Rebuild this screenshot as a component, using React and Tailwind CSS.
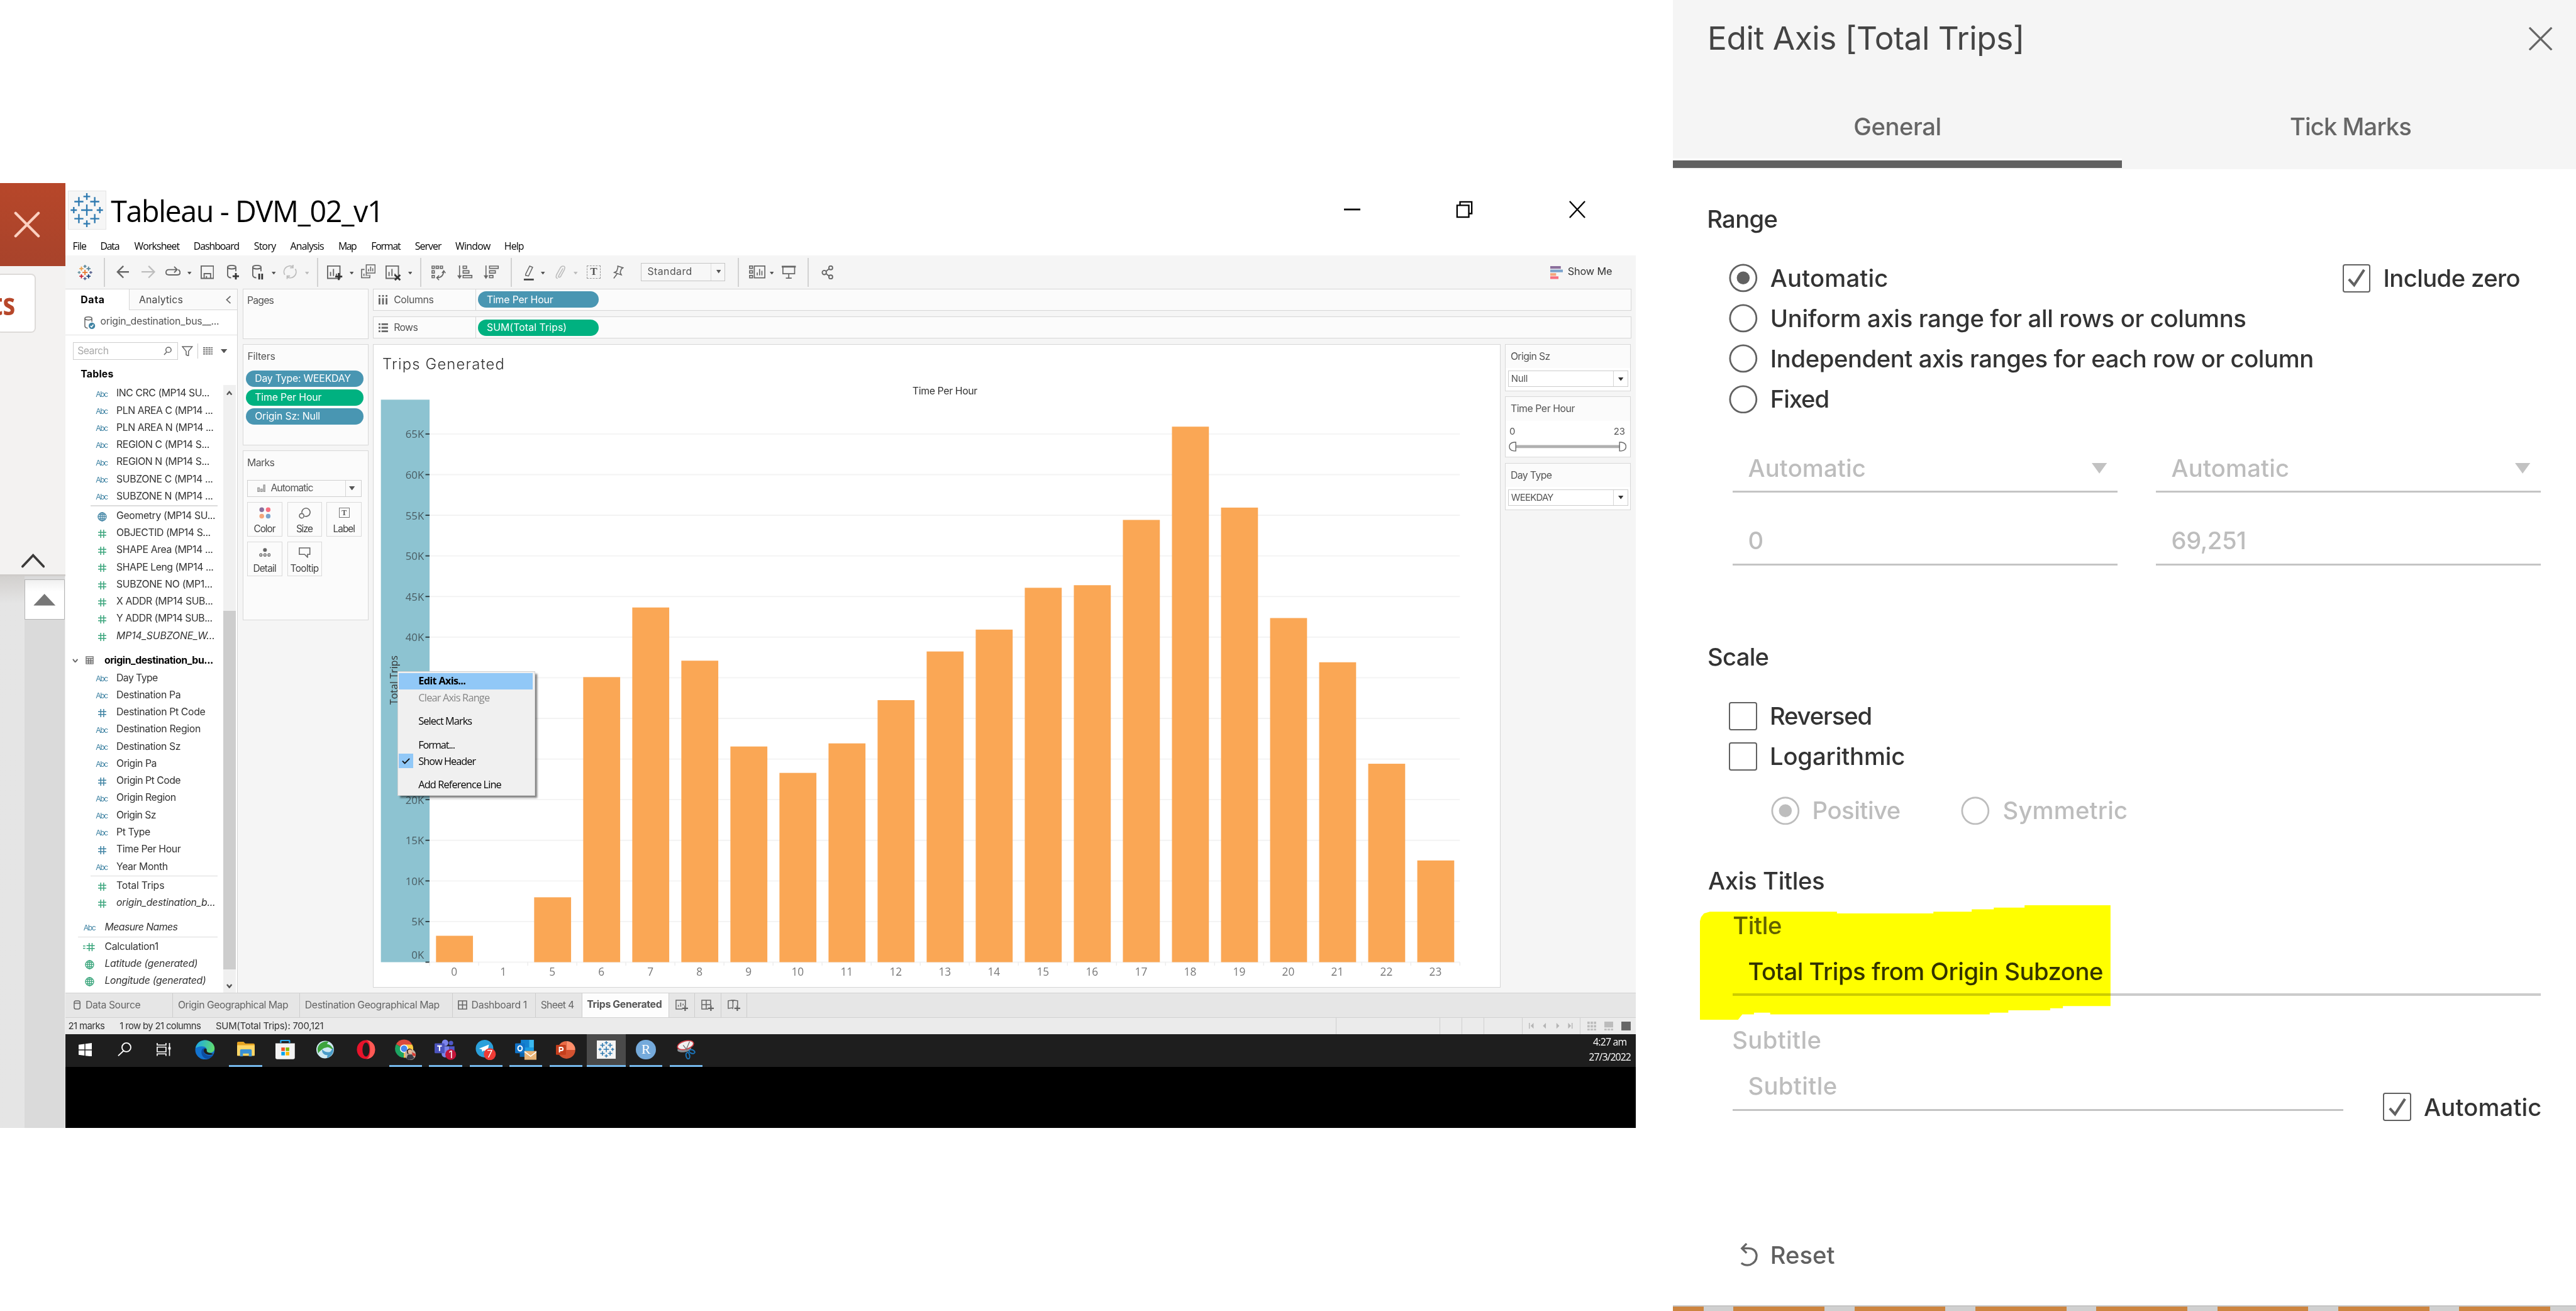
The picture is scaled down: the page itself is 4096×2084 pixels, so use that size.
import React, { useLayoutEffect, useRef } from "react";

/* A single line of text whose tracking is adjusted to fill a given width. */
function T({ w, className = "", children }) {
  const outer = useRef(null);
  const inner = useRef(null);
  useLayoutEffect(() => {
    const o = outer.current;
    const i = inner.current;
    i.style.letterSpacing = "0px";
    const ow = o.getBoundingClientRect().width;
    const iw = i.getBoundingClientRect().width;
    const n = i.textContent.length;
    if (n > 1 && iw > 0) i.style.letterSpacing = (((ow - iw) / ow) * w) / (n - 1) + "px";
  }, [w, children]);
  return (
    <span ref={outer} style={{ width: w }} className={"block shrink-0 whitespace-pre leading-none " + className}>
      <span ref={inner} className="whitespace-pre">{children}</span>
    </span>
  );
}

const Svg = ({ w, h, className = "", children, ...p }) => (
  <svg width={w} height={h} viewBox={`0 0 ${w} ${h}`} fill="none" stroke="#666" strokeWidth="2" className={"block shrink-0 " + className} {...p}>
    {children}
  </svg>
);

const Caret = ({ w = 8, h = 6, color = "#555", className = "" }) => (
  <Svg w={w} h={h} stroke="none" className={className}>
    <path d={`M0 0H${w}L${w / 2} ${h}Z`} fill={color} />
  </Svg>
);

const VSep = ({ className = "" }) => <div className={"h-[49px] w-[2px] shrink-0 bg-[#d2d2d2] " + className} />;

const plus = (x, y, r, key, color) => (
  <path key={key} d={`M${x - r} ${y}h${2 * r}M${x} ${y - r}v${2 * r}`} stroke={color} />
);

function TableauMark({ size, className = "", sw = 2, colors }) {
  const c = colors || ["#2f7ab0", "#2f7ab0", "#2f7ab0", "#2f7ab0", "#2f7ab0", "#2f7ab0", "#2f7ab0", "#2f7ab0", "#2f7ab0"];
  return (
    <svg width={size} height={size} viewBox="0 0 60 60" fill="none" strokeWidth={sw} className={"block shrink-0 " + className}>
      {plus(30, 30, 10, 0, c[0])}
      {plus(16, 15, 8, 1, c[1])}
      {plus(44, 15, 8, 2, c[2])}
      {plus(16, 45, 8, 3, c[3])}
      {plus(44, 45, 8, 4, c[4])}
      {plus(30, 6, 6, 5, c[5])}
      {plus(30, 54, 6, 6, c[6])}
      {plus(7, 30, 5.5, 7, c[7])}
      {plus(53, 30, 5.5, 8, c[8])}
    </svg>
  );
}

/* ---------- slide editor strip at the far left ---------- */
function SlideStrip() {
  return (
    <div className="flex h-[1611px] w-[112px] shrink-0 flex-col overflow-hidden bg-[#e5e5e5]">
      <div className="flex h-[142px] shrink-0 items-start bg-gradient-to-b from-[#b7472a] to-[#a8432b] pt-[48px] pl-[24px]">
        <Svg w={45} h={45} stroke="#fbd0c0" strokeWidth="4.5" strokeLinecap="round">
          <path d="M3 3L42 42M42 3L3 42" />
        </Svg>
      </div>
      <div className="h-[528px] shrink-0 border-b-4 border-[#cfccca] bg-[#f3f2f1]">
        <div className="mt-[13px] -ml-[6px] flex h-[100px] w-[67px] items-center justify-end rounded-[8px] border-[3px] border-[#dddbd9] bg-white pr-[33px]">
          <span className="origin-right scale-x-[0.82] font-['Open_Sans',sans-serif] text-[52px] leading-none font-bold text-[#b7472a]">ts</span>
        </div>
        <Svg w={40} h={24} stroke="#3b3a39" strokeWidth="4" strokeLinecap="round" className="mt-[377px] ml-[36px]">
          <path d="M2 22L20 3L38 22" />
        </Svg>
      </div>
      <div className="flex grow">
        <div className="w-[42px] bg-gradient-to-b from-[#d2d0ce] via-[#e5e5e5] via-[5%] to-[#e5e5e5]" />
        <div className="w-[69px] bg-[#dadada] pt-[6px]">
          <div className="flex h-[68px] w-[68px] items-center justify-center border-2 border-[#b5b5b5] bg-gradient-to-b from-[#f0f0f0] to-white to-[30%]">
            <Caret w={38} h={20} color="#777" className="rotate-180" />
          </div>
        </div>
        <div className="w-px bg-[#efefef]" />
      </div>
    </div>
  );
}

/* ---------- window title, menus, toolbar ---------- */
const MENUS = [
  ["File", 24, "ml-[12px]"], ["Data", 33.5, "ml-[23px]"], ["Worksheet", 78, "ml-[24.5px]"], ["Dashboard", 79, "ml-[23px]"],
  ["Story", 38, "ml-[24px]"], ["Analysis", 58, "ml-[24px]"], ["Map", 32, "ml-[24px]"], ["Format", 51, "ml-[24px]"],
  ["Server", 46, "ml-[23.6px]"], ["Window", 60.5, "ml-[23px]"], ["Help", 34, "ml-[23px]"],
];

function TitleBar() {
  return (
    <div className="flex h-[91px] items-start pl-[4px]">
      <div className="mt-[13px] flex h-[66px] w-[65px] items-center justify-center border border-[#e4e4e4] bg-[#f6f6f6]">
        <TableauMark size={58} sw={2.6} />
      </div>
      <T w={466} className="mt-[22.5px] ml-[8px] font-['Open_Sans',sans-serif] text-[50px] text-black">Tableau - DVM_02_v1</T>
      <div className="ml-[1637px] flex">
        <Svg w={28} h={30} stroke="#000" strokeWidth="3" className="mt-[30px]"><path d="M0 15H28" /></Svg>
        <Svg w={30} h={30} stroke="#000" strokeWidth="2.5" className="mt-[30px] ml-[163px]">
          <path d="M2 8H22V28H2ZM7 8V2H27V22H22" />
        </Svg>
        <Svg w={30} h={30} stroke="#000" strokeWidth="2.5" className="mt-[30px] ml-[162px]"><path d="M2 1L28 29M28 1L2 29" /></Svg>
      </div>
    </div>
  );
}

function MenuBar() {
  return (
    <div className="flex h-[32px] items-start pt-[8.5px] font-['Open_Sans',sans-serif] text-[17px] text-black">
      {MENUS.map(([t, w, m]) => <T key={t} w={w} className={m}>{t}</T>)}
    </div>
  );
}

const chartBox = <path d="M1 1H22V22H1ZM6 18V11M11 18V6M16 18V14" />;

function Toolbar() {
  const D = "#666";
  const L = "#bdbdbd";
  return (
    <div className="flex h-[57px] items-start bg-[#f5f5f5] pt-[5px]">
      <TableauMark size={26} sw={4.5} className="mt-[12px] ml-[20px]" colors={["#e8762c", "#e8a04c", "#5b879b", "#c72035", "#1f457e", "#5b879b", "#5b6591", "#7099a6", "#5b6591"]} />
      <VSep className="ml-[19px]" />
      <Svg w={22} h={24} strokeWidth="2.6" className="mt-[12px] ml-[19px]"><path d="M12 2L2 12L12 22M2 12H22" /></Svg>
      <Svg w={24} h={24} stroke={L} strokeWidth="2.4" className="mt-[12px] ml-[21px]"><path d="M12 2L22 12L12 22M22 12H0" /></Svg>
      <Svg w={26} h={18} className="mt-[14px] ml-[17px]"><path d="M15 1L20 6L15 11M20 6H6Q1 6 1 11Q1 15 6 15H20Q25 15 25 11Q25 8 22 6" /></Svg>
      <Caret w={7} h={5} className="mt-[23px] ml-[12px]" />
      <Svg w={23} h={23} className="mt-[13px] ml-[15px]"><path d="M1 1H22V22H1ZM6 22V14H17V22M10 22V18" /></Svg>
      <Svg w={21} h={26} className="mt-[12px] ml-[22px]">
        <ellipse cx="8" cy="4" rx="7" ry="3" /><path d="M1 4V18Q2 22 7 22M15 4V11" /><path d="M15 14V25M9.500 19.500H20.500" stroke="#333" strokeWidth="3" />
      </Svg>
      <Svg w={19} h={26} className="mt-[12px] ml-[22px]">
        <ellipse cx="8" cy="4" rx="7" ry="3" /><path d="M1 4V18Q2 22 7 22M15 4V11" /><path d="M12 15V25M17 15V25" stroke="#333" strokeWidth="3" />
      </Svg>
      <Caret w={7} h={5} className="mt-[23px] ml-[15px]" />
      <Svg w={24} h={24} stroke={L} className="mt-[12px] ml-[12px]"><path d="M3 17A10 10 0 0 1 17 3.500M21 7A10 10 0 0 1 7 20.500M17 0V5H12M7 24V19H12" /></Svg>
      <Caret w={7} h={5} color={L} className="mt-[23px] ml-[13px]" />
      <VSep className="ml-[14px]" />
      <Svg w={27} h={26} className="mt-[13px] ml-[15px]">{chartBox}<path d="M20 13V25M14 19H26" stroke="#333" strokeWidth="3" /></Svg>
      <Caret w={7} h={5} className="mt-[23px] ml-[11px]" />
      <Svg w={25} h={24} className="mt-[11px] ml-[13px]">
        <path d="M9 1H24V15H9ZM13 12V8M16.500 12V4M20 12V7M6 9H1V23H15V18M5 20V16M9 20V16M12 20V18" strokeWidth="1.700" />
      </Svg>
      <Svg w={27} h={26} className="mt-[13px] ml-[17px]">{chartBox}<path d="M16 16L25 25M25 16L16 25" stroke="#333" strokeWidth="3" /></Svg>
      <Caret w={7} h={5} className="mt-[23px] ml-[11px]" />
      <VSep className="ml-[14px]" />
      <Svg w={25} h={25} className="mt-[13px] ml-[17px]" strokeWidth="1.700">
        <path d="M1 1H5V5H1ZM8 1H12V5H8ZM15 1H19V5H15ZM1 9H5V13H1ZM1 17H5V21H1ZM9 21Q20 21 21 10M18 13L21 9L24 13M13 17L9 21L13 25" />
      </Svg>
      <Svg w={26} h={24} className="mt-[13px] ml-[19.500px]" strokeWidth="1.700">
        <path d="M4 0V19M10 1H16V5H10ZM10 9H20V13H10ZM10 17H25V21H10Z" /><path d="M0 17H8L4 23Z" fill={D} stroke="none" />
      </Svg>
      <Svg w={26} h={24} className="mt-[13px] ml-[19px]" strokeWidth="1.700">
        <path d="M4 0V19M10 1H25V5H10ZM10 9H20V13H10ZM10 17H16V21H10Z" /><path d="M0 17H8L4 23Z" fill={D} stroke="none" />
      </Svg>
      <VSep className="ml-[19.500px]" />
      <Svg w={19} h={25} className="mt-[13px] ml-[20px]"><path d="M11 1L16 3L9 18L4 17L4 15Z" strokeWidth="1.600" /><path d="M1 24H18" strokeWidth="3" stroke="#444" /></Svg>
      <Caret w={7} h={5} className="mt-[23px] ml-[11px]" />
      <Svg w={18} h={24} stroke={L} className="mt-[13px] ml-[17px]" strokeWidth="1.700"><path d="M13 5L6 17Q4 20 7 20Q9 20 10 17L15 8Q18 1 13 1Q10 1 8 5L2 16Q0 22 4 22" /></Svg>
      <Caret w={7} h={5} color={L} className="mt-[23px] ml-[14px]" />
      <div className="mt-[13px] ml-[15px] flex h-[22px] w-[24px] items-center justify-center border-2 border-dashed border-[#999] font-['Liberation_Serif',serif] text-[18px] leading-none font-bold text-[#555]">T</div>
      <Svg w={19} h={23} className="mt-[13px] ml-[20px]" strokeWidth="1.700"><path d="M9 1L18 4L15 6L13 12L15 16L3 12L7 10L9 4ZM8 14L2 22" /></Svg>
      <div className="mt-[8px] ml-[29px] flex h-[31px] w-[144px] items-center border border-[#c6c6c6] bg-[#f7f7f7]">
        <T w={76} className="ml-[10.500px] text-[17px] text-[#555]">Standard</T>
        <div className="ml-[32px] h-full w-px bg-[#dcdcdc]" />
        <Caret w={8} h={6} className="ml-[8px]" />
      </div>
      <VSep className="ml-[22px]" />
      <Svg w={28} h={23} className="mt-[13px] ml-[17px]" strokeWidth="1.800"><path d="M1 1H6V5H1ZM1 9H6V13H1ZM1 17H6V21H1ZM9 1H27V21H9ZM14 17V12M18 17V6M22 17V9" /></Svg>
      <Caret w={7} h={5} className="mt-[23px] ml-[7px]" />
      <Svg w={24} h={23} className="mt-[13px] ml-[14px]" strokeWidth="1.800"><path d="M2 3V14H22V3M12 14V21M7 21.500H17" /><path d="M0 2H24" strokeWidth="3" /></Svg>
      <VSep className="ml-[20px]" />
      <Svg w={21} h={24} className="mt-[13px] ml-[21px]"><circle cx="5" cy="12" r="3.500" /><circle cx="16" cy="4" r="3.200" /><circle cx="16" cy="19.500" r="3.200" /><path d="M8 10L13 6M8 14L13 18" /></Svg>
      <Svg w={22} h={23} stroke="none" className="mt-[14px] ml-[1222px]">
        <path d="M0 0H18V4.500H0Z" fill="#8b6f9c" /><path d="M0 6H22V10.500H0Z" fill="#7ba3cc" /><path d="M0 12H10V16.500H0Z" fill="#f4a67c" /><path d="M0 17.500H14V22H0Z" fill="#f96f7f" />
      </Svg>
      <T w={76} className="mt-[14px] ml-[8px] text-[17.5px] text-[#333]">Show Me</T>
    </div>
  );
}

/* ---------- data pane ---------- */
const Hash = ({ color, calc }) => (
  <Svg w={calc ? 20 : 14} h={14} stroke={color} strokeWidth="1.600" className={calc ? "-ml-[2px]" : ""}>
    {calc ? <path d="M0 5H4M0 9H4M10.500 0V14M15.500 0V14M6 4.500H20M6 9.500H20" /> : <path d="M4.500 0V14M9.500 0V14M0 4.500H14M0 9.500H14" />}
  </Svg>
);
const Globe = ({ color }) => (
  <Svg w={16} h={16} stroke={color} strokeWidth="1.400">
    <circle cx="8" cy="8" r="7" /><ellipse cx="8" cy="8" rx="3.400" ry="7" /><path d="M1 8H15M8 1V15M2.500 4.500H13.500M2.500 11.500H13.500" />
  </Svg>
);
const BLUE = "#3f83a3";
const GREEN = "#3aa57c";

function FieldIcon({ kind }) {
  if (kind === "abc") return <T w={21.5} className="text-[13px] text-[#3f83a3]">Abc</T>;
  if (kind === "num") return <Hash color={GREEN} />;
  if (kind === "dim") return <Hash color={BLUE} />;
  if (kind === "calc") return <Hash color={GREEN} calc />;
  if (kind === "geo") return <Globe color={BLUE} />;
  return <Globe color={GREEN} />;
}

function Field({ f, top }) {
  const [kind, label, w, it] = f;
  return (
    <div className={"flex h-[29.25px] items-center text-[17px] text-[#333] " + (top ? "pl-[30px]" : "pl-[51px]")}>
      <div className="flex w-[22px] shrink-0 justify-center pt-[3px]"><FieldIcon kind={kind} /></div>
      <T w={w} className={(top ? "ml-[14.5px] " : "ml-[13.5px] ") + (it ? "italic" : "")}>{label}</T>
    </div>
  );
}

const G1 = [["abc", "INC CRC (MP14 SU...", 159], ["abc", "PLN AREA C (MP14 ...", 165], ["abc", "PLN AREA N (MP14 ...", 166], ["abc", "REGION C (MP14 S...", 159], ["abc", "REGION N (MP14 S...", 159], ["abc", "SUBZONE C (MP14 ...", 165], ["abc", "SUBZONE N (MP14 ...", 165]];
const G2 = [["geo", "Geometry (MP14 SU...", 169], ["num", "OBJECTID (MP14 S...", 161], ["num", "SHAPE Area (MP14 ...", 165], ["num", "SHAPE Leng (MP14 ...", 166], ["num", "SUBZONE NO (MP1...", 164], ["num", "X ADDR (MP14 SUB...", 165], ["num", "Y ADDR (MP14 SUB...", 164], ["num", "MP14_SUBZONE_W...", 168, true]];
const G3 = [["abc", "Day Type", 71], ["abc", "Destination Pa", 110], ["dim", "Destination Pt Code", 152], ["abc", "Destination Region", 144], ["abc", "Destination Sz", 110], ["abc", "Origin Pa", 69], ["dim", "Origin Pt Code", 110], ["abc", "Origin Region", 102], ["abc", "Origin Sz", 68], ["abc", "Pt Type", 58], ["dim", "Time Per Hour", 110], ["abc", "Year Month", 88]];
const G4 = [["num", "Total Trips", 82], ["num", "origin_destination_b...", 169, true]];
const G5 = [["calc", "Calculation1", 92], ["ggeo", "Latitude (generated)", 159, true], ["ggeo", "Longitude (generated)", 173, true]];

function DataPane() {
  return (
    <div className="flex h-[1200px] w-[293px] shrink-0 flex-col border-r-2 border-[#d6d6d6] bg-white">
      <div className="flex h-[37px] shrink-0">
        <div className="w-[108px] border-t-2 border-[#d9d9d9] pt-[10px] pl-[25.5px]">
          <T w={40.5} className="text-[17px] font-bold text-black">Data</T>
        </div>
        <div className="flex grow border-2 border-r-0 border-[#d6d6d6] bg-[#fafafa] pt-[10px] pl-[16px]">
          <T w={75} className="text-[17px] text-[#444]">Analytics</T>
          <Svg w={9} h={14} strokeWidth="1.800" className="mt-[1px] ml-[73px]"><path d="M8 1L1.500 7L8 13" /></Svg>
        </div>
      </div>
      <div className="flex h-[43px] shrink-0 items-start border-b-2 border-[#e1e1e1] pt-[10px] pl-[32px]">
        <Svg w={19} h={23} strokeWidth="1.600"><ellipse cx="7" cy="3.500" rx="6" ry="2.600" /><path d="M1 3.500V17Q2 20 6 20M13 3.500V9" /><circle cx="13" cy="16" r="5.500" fill={BLUE} stroke="none" /><path d="M10.500 16L12.500 18L15.500 14" stroke="#fff" /></Svg>
        <T w={203} className="mt-[1px] ml-[8px] text-[17px] text-[#555]">origin_destination_bus__...</T>
      </div>
      <div className="flex h-[84px] shrink-0 flex-col">
        <div className="mt-[11px] ml-[12px] flex h-[31px] items-center">
          <div className="flex h-[31px] w-[180px] shrink-0 items-center border-2 border-[#cfcfcf] pl-[7px]">
            <T w={53.5} className="text-[17px] text-[#aaa]">Search</T>
            <Svg w={14} h={15} strokeWidth="1.600" className="ml-[93px]"><circle cx="8.500" cy="5.500" r="4.500" /><path d="M5.500 9L1 14" /></Svg>
          </div>
          <Svg w={19} h={18} strokeWidth="1.600" className="ml-[6px]"><path d="M1 1H18L11.500 9V17L7.500 15V9Z" /></Svg>
          <div className="ml-[8px] h-[25px] w-px bg-[#ccc]" />
          <Svg w={17} h={14} strokeWidth="2" className="ml-[8px]"><path d="M0 2H17M0 5.500H17M0 9H17M0 12.500H17" strokeDasharray="3.500 1" /></Svg>
          <Caret w={11} h={7} className="ml-[13px]" />
        </div>
        <T w={56} className="mt-[15.500px] ml-[25.5px] text-[17px] font-bold text-black">Tables</T>
      </div>
      <div className="flex min-h-0 grow">
        <div className="w-[269px] shrink-0">
          {G1.map((f) => <Field key={f[1]} f={f} />)}
          <div className="mt-[1px] mb-[1px] ml-[42px] h-[2px] w-[217px] bg-[#dcdcdc]" />
          {G2.map((f) => <Field key={f[1]} f={f} />)}
          <div className="mt-[12.5px] flex h-[30px] items-center pl-[11px]">
            <Svg w={10} h={7} strokeWidth="2"><path d="M1 1L5 6L9 1" /></Svg>
            <Svg w={14} h={14} strokeWidth="1.300" className="ml-[13px]"><path d="M1 1H13V13H1ZM1 4H13M1 7H13M1 10H13M5 4V13M9 4V13" /></Svg>
            <T w={186} className="ml-[18px] text-[17px] font-bold text-black">origin_destination_bu...</T>
          </div>
          {G3.map((f) => <Field key={f[1]} f={f} />)}
          <div className="mt-[1px] mb-[1px] ml-[42px] h-[1.5px] w-[217px] bg-[#dcdcdc]" />
          {G4.map((f) => <Field key={f[1]} f={f} />)}
          <div className="h-[12.5px]" />
          <Field top f={["abc", "Measure Names", 125, true]} />
          <div className="mt-[1px] mb-[1px] ml-[21px] h-[1.5px] w-[238px] bg-[#dcdcdc]" />
          {G5.map((f) => <Field top key={f[1]} f={f} />)}
        </div>
        <div className="flex w-[21px] flex-col items-center bg-[#f0f0f0]">
          <Svg w={10} h={8} strokeWidth="2.600" stroke="#555" className="mt-[10px]"><path d="M1 7L5 2L9 7" /></Svg>
          <div className="mt-[368px] h-[611px] w-full shrink-0 bg-[#cdcdcd]" />
          <Svg w={10} h={8} strokeWidth="2.600" stroke="#555" className="mt-[24px]"><path d="M1 1L5 6L9 1" /></Svg>
        </div>
      </div>
    </div>
  );
}

/* ---------- cards ---------- */
const Pill = ({ children, w, green, className = "" }) => (
  <div className={"flex h-[28px] items-center rounded-full pl-[15px] text-[17px] text-white " + (green ? "bg-[#00b180] " : "bg-[#4996b2] ") + className}>
    <T w={w}>{children}</T>
  </div>
);

const MarkButton = ({ label, w, icon, className = "" }) => (
  <div className={"flex h-[59px] shrink-0 flex-col items-center border-2 border-[#dadada] bg-[#fbfbfb] pt-[8px] " + className}>
    <div className="flex h-[20px] items-center">{icon}</div>
    <T w={w} className="mt-[8.500px] text-[16.5px] text-[#444]">{label}</T>
  </div>
);

function CardsColumn() {
  const box = "border-2 border-[#d8d8d8] bg-[#fbfbfb] ";
  return (
    <div className="ml-[8.5px] flex w-[215px] shrink-0 flex-col">
      <div className={box + "h-[86px] pt-[11px] pl-[7px]"}>
        <T w={46} className="text-[17px] text-[#555]">Pages</T>
      </div>
      <div className={box + "mt-[9px] h-[172px] pt-[11px] pl-[5px]"}>
        <T w={47.5} className="ml-[2.5px] text-[17px] text-[#555]">Filters</T>
        <div className="mt-[16px] flex w-[200.500px] flex-col gap-[4px]">
          <Pill w={164}>Day Type: WEEKDAY</Pill>
          <Pill w={114} green>Time Per Hour</Pill>
          <Pill w={111.5}>Origin Sz: Null</Pill>
        </div>
      </div>
      <div className={box + "mt-[9.500px] h-[289px] pt-[11px] pl-[7px]"}>
        <T w={47} className="text-[17px] text-[#555]">Marks</T>
        <div className="mt-[20.500px] flex h-[29px] w-[195px] items-center border-2 border-[#d0d0d0] pl-[16px]">
          <Svg w={14} h={14} stroke="#999" strokeWidth="1.600"><path d="M1 6H3.500V12H1ZM6 8H8.500V12H6ZM11 1H13V12H11Z" /></Svg>
          <T w={73} className="ml-[9px] text-[17px] text-[#555]">Automatic</T>
          <div className="ml-[54px] h-full w-px bg-[#d6d6d6]" />
          <Caret w={10} h={7} className="ml-[6px]" />
        </div>
        <div className="mt-[8.500px] flex">
          <MarkButton className="w-[60px]" label="Color" w={37.5} icon={<Svg w={20} h={20} stroke="none"><circle cx="4.500" cy="4.500" r="4" fill="#8b6f9c" /><circle cx="15.500" cy="4.500" r="4" fill="#f96f7f" /><circle cx="4.500" cy="15.500" r="4" fill="#f4a67c" /><circle cx="15.500" cy="15.500" r="4" fill="#7ba3cc" /></Svg>} />
          <MarkButton className="ml-[8.500px] w-[59px]" label="Size" w={29} icon={<Svg w={20} h={20} strokeWidth="1.700"><path d="M5.500 10A7 7 0 1 1 10 15.500" /><circle cx="5" cy="15" r="3.900" /></Svg>} />
          <MarkButton className="ml-[8px] w-[60px]" label="Label" w={38} icon={<div className="flex h-[17px] w-[18px] items-center justify-center border-2 border-[#777] font-['Liberation_Serif',serif] text-[13px] leading-none font-bold text-[#555]">T</div>} />
        </div>
        <div className="mt-[8.500px] flex">
          <MarkButton className="w-[60px]" label="Detail" w={40} icon={<Svg w={20} h={16} strokeWidth="1.500"><circle cx="10" cy="3.500" r="2.500" fill="#666" /><circle cx="3" cy="12" r="2" /><circle cx="10" cy="12" r="2" /><circle cx="17" cy="12" r="2" /></Svg>} />
          <MarkButton className="ml-[8.500px] w-[59px]" label="Tooltip" w={49} icon={<Svg w={20} h={18} strokeWidth="1.700"><path d="M1 1H19V12H15V17L10 12H1Z" /></Svg>} />
        </div>
      </div>
    </div>
  );
}

function Shelf({ icon, label, w, pill, className = "" }) {
  return (
    <div className={"flex h-[38px] shrink-0 items-center border-2 border-[#d6d6d6] bg-[#fbfbfb] pl-[8.5px] " + className}>
      <div className="w-[25.500px] shrink-0">{icon}</div>
      <div className="w-[139px] shrink-0"><T w={w} className="text-[17px] text-[#555]">{label}</T></div>
      <div className="h-full w-[1.500px] bg-[#d6d6d6]" />
      {pill}
    </div>
  );
}

/* ---------- bar chart ---------- */
const BARS = [["0", 1596], ["1", 1641], ["5", 1530.4], ["6", 1155], ["7", 1036.3], ["8", 1127], ["9", 1273.3], ["10", 1318.3], ["11", 1268], ["12", 1194.3], ["13", 1111.3], ["14", 1074], ["15", 1002.7], ["16", 998.3], ["17", 887], ["18", 728], ["19", 866], ["20", 1054.3], ["21", 1129.7], ["22", 1302.7], ["23", 1467.6]];
const GRID = [0, 5, 10, 15, 20, 25, 30, 35, 40, 45, 50, 55, 60, 65];
/* ticks that lie under the open axis menu carry no label */
const COVERED = [25, 30, 35];

function Chart() {
  return (
    <svg width="1918" height="1000" viewBox="637.5 679.5 1918 1000" className="block font-['Open_Sans',sans-serif]">
      <rect x="650" y="682" width="83" height="959" fill="#8dc3d1" />
      {GRID.map((t) => {
        const y = 1641 - (t / 5) * 69.27;
        return (
          <g key={t}>
            <path d={`M733 ${y}H2490`} stroke="#f3f3f3" strokeWidth="2" />
            {!COVERED.includes(t) && (
              <>
                <path d={`M726 ${y}H733`} stroke="#2c3b40" strokeWidth="2" />
                <text x="723.5" y={t === 0 ? 1635.5 : y + 7} textAnchor="end" fontSize="18" fill="#4a5c62">{t}K</text>
              </>
            )}
          </g>
        );
      })}
      <text transform="translate(678 1160) rotate(-90)" textAnchor="middle" fontSize="17" textLength="84" fill="#333">Total Trips</text>
      {BARS.map(([h, top], i) => {
        const x = 744 + i * 83.67;
        return (
          <g key={h}>
            <rect x={x} y={top} width="63" height={1641 - top} fill="#faa755" />
            <text x={x + 31} y="1664.5" textAnchor="middle" fontSize="18.500" fill="#777">{h}</text>
            <path d={`M${x - 11} 1641v6`} stroke="#ececec" strokeWidth="1.500" />
          </g>
        );
      })}
      <path d="M2490 1641v6" stroke="#ececec" strokeWidth="1.500" />
    </svg>
  );
}

function MenuItem({ label, w, className = "", active, checked }) {
  return (
    <div className={"flex h-[28px] shrink-0 items-center text-[17.5px] " + (active ? "bg-[#91c8f7] font-bold " : "") + className}>
      <div className={"flex h-[25px] w-[25px] items-center justify-center " + (checked ? "bg-[#91c8f7]" : "")}>
        {checked && <Svg w={14} h={11} stroke="#111"><path d="M1 5L5 9L13 1" /></Svg>}
      </div>
      <T w={w} className="ml-[9px]">{label}</T>
    </div>
  );
}

function AxisMenu() {
  return (
    <div className="absolute top-[556.5px] left-[40px] flex h-[213px] w-[235px] flex-col border-2 border-[#d2d2d2] bg-[#f0f0f0] py-[2px] pr-[3px] pl-[1px] font-['Open_Sans',sans-serif] text-black shadow-[4px_4px_3px_rgba(0,0,0,0.5)]">
      <MenuItem active label="Edit Axis..." w={81} />
      <MenuItem label="Clear Axis Range" w={122} className="text-[#858585]" />
      <MenuItem label="Select Marks" w={92} className="mt-[12.500px]" />
      <MenuItem label="Format..." w={63} className="mt-[12px]" />
      <MenuItem label="Show Header" w={98.5} checked />
      <MenuItem label="Add Reference Line" w={142} className="mt-[12.500px]" />
    </div>
  );
}

/* ---------- filter controls ---------- */
const Select = ({ value, w }) => (
  <div className="mx-[4px] mt-[4.500px] flex h-[28px] items-center border-2 border-[#cdcdcd] bg-white pl-[4px] text-[16px] text-[#555]">
    <T w={w}>{value}</T>
    <div className="ml-auto h-full w-px bg-[#d6d6d6]" />
    <Caret w={9} h={6} color="#333" className="mr-[7px] ml-[7px]" />
  </div>
);

function FilterCard({ title, w, children, className = "" }) {
  return (
    <div className={"border-2 border-[#d8d8d8] bg-white " + className}>
      <div className="h-[40px] bg-[#fbfbfb] pt-[12px] pl-[8px]"><T w={w} className="text-[17px] text-[#555]">{title}</T></div>
      {children}
    </div>
  );
}

function Filters() {
  return (
    <div className="ml-[8.500px] flex w-[214.500px] shrink-0 flex-col">
      <FilterCard title="Origin Sz" w={68} className="h-[81px]"><Select value="Null" w={28.5} /></FilterCard>
      <FilterCard title="Time Per Hour" w={110} className="mt-[8.500px] h-[104px]">
        <div className="flex justify-between pt-[11px] pr-[9px] pl-[6px] text-[16px] text-[#555]"><span className="leading-none">0</span><span className="leading-none">23</span></div>
        <Svg w={201} h={17} className="mt-[9px] ml-[5px]" strokeWidth="1.500">
          <path d="M12 8.500H190" stroke="#b0b0b0" strokeWidth="5" /><path d="M12 1V16H9Q1 15 1 8.500Q1 2 9 1ZM189 1V16H192Q200 15 200 8.500Q200 2 192 1Z" fill="#fff" />
        </Svg>
      </FilterCard>
      <FilterCard title="Day Type" w={71} className="mt-[9px] h-[81px]"><Select value="WEEKDAY" w={72.5} /></FilterCard>
    </div>
  );
}

/* ---------- bottom bars ---------- */
function SheetTabs() {
  const tab = "flex h-full shrink-0 items-center border-r-2 border-[#cdcdcd] ";
  return (
    <div className="flex h-[42.500px] shrink-0 border-t-2 border-b-2 border-[#d2d2d2] bg-[#e6e6e6] text-[17px] text-[#666]">
      <div className={tab + "w-[183px] pl-[13px]"}>
        <Svg w={12} h={16} strokeWidth="1.600"><rect x="1" y="1" width="10" height="14" rx="3" /><path d="M1 5H11" /></Svg>
        <T w={94} className="ml-[9px]">Data Source</T>
      </div>
      <div className={tab + "w-[217px] pl-[8.500px]"}><T w={188.5}>Origin Geographical Map</T></div>
      <div className={tab + "w-[260px] pl-[8px]"}><T w={230}>Destination Geographical Map</T></div>
      <div className={tab + "w-[142px] pl-[9px]"}>
        <Svg w={16} h={16} strokeWidth="1.700"><path d="M1 1H15V15H1ZM8 1V15M1 8H15" /></Svg>
        <T w={95} className="ml-[7px]">Dashboard 1</T>
      </div>
      <div className={tab + "w-[79px] pl-[8px]"}><T w={57.5}>Sheet 4</T></div>
      <div className={tab + "w-[148px] bg-[#fdfdfd] pb-[3px] pl-[8px]"}><T w={128} className="font-bold text-[#555]">Trips Generated</T></div>
      <div className={tab + "w-[44.500px] justify-center"}><Svg w={22} h={20} strokeWidth="1.600"><path d="M12 16H1V1H17V10M5 12V9M9 12V5M13 10V7" /><path d="M16.500 10V20M11.500 15H21.500" strokeWidth="2.400" /></Svg></div>
      <div className={tab + "w-[44.500px] justify-center"}><Svg w={22} h={20} strokeWidth="1.600"><path d="M12 16H1V1H16V10M8.500 1V16M1 8.500H16" /><path d="M16.500 10V20M11.500 15H21.500" strokeWidth="2.400" /></Svg></div>
      <div className={tab + "w-[44.500px] justify-center"}><Svg w={22} h={20} strokeWidth="1.600"><path d="M9 16L8 14L1 15V2L8 1L9 4L10 1L17 2V10M9 4V14" /><path d="M16.500 10V20M11.500 15H21.500" strokeWidth="2.400" /></Svg></div>
    </div>
  );
}

function StatusBar() {
  const sep = "h-full w-[1.500px] shrink-0 bg-[#cfcfcf] ";
  return (
    <div className="flex h-[28.500px] shrink-0 items-center bg-[#ebebeb] text-[16px] text-[#333]">
      <T w={62.5} className="ml-[4.500px]">21 marks</T>
      <T w={139} className="ml-[25px]">1 row by 21 columns</T>
      <T w={184} className="ml-[25px]">SUM(Total Trips): 700,121</T>
      <div className={sep + "ml-[1726px]"} />
      <div className={sep + "ml-[175.500px]"} />
      <div className={sep + "ml-[36px]"} />
      <div className={sep + "ml-[36px]"} />
      <div className={sep + "ml-[64px]"} />
      <Svg w={75} h={10} stroke="none" className="ml-[10px]">
        <path d="M0 0H1.500V10H0ZM8 0V10L3 5ZM29 0V10L24 5ZM47 0V10L52 5ZM67 0V10L72 5ZM73 0H74.500V10H73Z" fill="#b5b5b5" />
      </Svg>
      <div className={sep + "ml-[12px]"} />
      <Svg w={74} h={16} stroke="none" className="ml-[12px]">
        <path d="M0 0H4V4H0ZM5.500 0H9.500V4H5.500ZM11 0H15V4H11ZM0 6H4V10H0ZM5.500 6H9.500V10H5.500ZM11 6H15V10H11ZM0 12H4V16H0ZM5.500 12H9.500V16H5.500ZM11 12H15V16H11ZM29 0H44V10H29ZM29 12H33V16H29ZM34.500 12H38.500V16H34.500ZM40 12H44V16H40Z" fill="#bcbcbc" />
        <path d="M58 0H74V16H58Z" fill="#666" />
      </Svg>
    </div>
  );
}

const Task = ({ children, className = "", line = true, active }) => (
  <div className={"flex h-full shrink-0 flex-col items-center justify-between " + (active ? "bg-[#4a4a4a] " : "") + className}>
    <div className="flex h-[52px] items-center justify-center">{children}</div>
    <div className={"h-[3px] w-full " + (line ? "bg-[#76b9ed]" : "")} />
  </div>
);

function Taskbar() {
  return (
    <div className="flex h-[55.500px] shrink-0 bg-[#1e1e1e]">
      <Task line={false} className="ml-[14px] w-[39px]"><Svg w={23} h={23} stroke="none"><path d="M0 3L10 1.500V11H0ZM11.500 1.300L23 0V11H11.500ZM0 12.500H10V21.500L0 20ZM11.500 12.500H23V23L11.500 21.700Z" fill="#fff" /></Svg></Task>
      <Task line={false} className="ml-[28px] w-[39px]"><Svg w={24} h={24} stroke="#fff"><circle cx="15" cy="8.500" r="7.500" /><path d="M10 14.500L1 23" /></Svg></Task>
      <Task line={false} className="ml-[28px] w-[39px]"><Svg w={24} h={22} stroke="#fff" strokeWidth="1.800"><path d="M1 0V3.500H16V0M1 22V18.500H16V22M1 7H16V15H1ZM22 0V22" /><path d="M20 7H24V11H20Z" fill="#fff" stroke="none" /></Svg></Task>
      <Task line={false} className="ml-[23px] w-[56px]">
        <Svg w={34} h={34} stroke="none">
          <defs><linearGradient id="eg" x1="0" x2="1" y1="0.200" y2="0.400"><stop stopColor="#1ba7e8" /><stop offset="1" stopColor="#5fdc70" /></linearGradient></defs>
          <circle cx="17" cy="17" r="16.500" fill="#1373cf" />
          <path d="M1 14C3 4 11 0.500 17 0.500C27 0.500 34 8 33.500 15C33 20 29 22 25 22C20 22 18.500 20 20 18C21 14 17 11 12 11C7 11 3 13 1 14Z" fill="url(#eg)" />
          <path d="M11 21C11 28 17 33 22 32.500C27 31 30 28 31 26C24 29 16 26 15 19C15 16 17 14 17 14C13 14 11 17 11 21Z" fill="#0c4ea3" />
          <path d="M15 19C16 24 22 26 27 25.500C29 25 31 24.500 31.500 25C29 21 20 24 20 18C20.500 16 19 14.500 17 14.500C15.500 15.500 15 17 15 19Z" fill="#1e1e1e" />
        </Svg>
      </Task>
      <Task className="ml-[13px] w-[56px]">
        <Svg w={30} h={26} stroke="none"><path d="M0 2Q0 0 2 0H11L14 3H28Q30 3 30 5V24H0Z" fill="#e5a322" /><path d="M0 6H30V22Q30 24 28 24H2Q0 24 0 22Z" fill="#ffd766" /><path d="M5 25V15Q5 13 7 13H23Q25 13 25 15V25H20V20H10V25Z" fill="#3a92d6" /></Svg>
      </Task>
      <Task line={false} className="ml-[11.500px] w-[56px]">
        <Svg w={33} h={34} stroke="none"><path d="M9 5V2Q9 1 10.500 1H22.500Q24 1 24 2V5" stroke="#29a8ea" strokeWidth="2.500" fill="none" /><path d="M0 6H33V30Q33 33 30 33H3Q0 33 0 30Z" fill="#f3f3f3" /><path d="M10 13H16V19H10Z" fill="#f25022" /><path d="M17.500 13H23.500V19H17.500Z" fill="#7fba00" /><path d="M10 20.500H16V26.500H10Z" fill="#00a4ef" /><path d="M17.500 20.500H23.500V26.500H17.500Z" fill="#ffb900" /></Svg>
      </Task>
      <Task line={false} className="ml-[12.500px] w-[56px]">
        <Svg w={30} h={31} stroke="none"><circle cx="15" cy="15.500" r="15" fill="#cfe8f2" /><path d="M2 14C4 4 14 0 21 2L18 6C26 8 28 13 29 17C24 12 20 11 17 12C12 12 6 18 3 22Z" fill="#3da33c" /><path d="M29 12C31 20 25 28 18 30L19 25C12 25 9 20 10 15C14 20 20 21 24 19Z" fill="#4a9cc9" /></Svg>
      </Task>
      <Task line={false} className="ml-[13px] w-[56px]">
        <Svg w={32} h={33} stroke="none"><ellipse cx="16" cy="16.500" rx="15.500" ry="16" fill="#e8132b" /><path d="M16 0.500C25 0.500 31.500 7 31.500 16.500S25 32.500 16 32.500C22 31 23 24 23 16.500S22 2 16 0.500Z" fill="#ff5a55" /><ellipse cx="16" cy="16.500" rx="6" ry="12" fill="#1e1e1e" /></Svg>
      </Task>
      <Task className="ml-[12px] w-[56px]">
        <Svg w={36} h={36} stroke="none">
          <path d="M15.500 16L2 8.500A15.500 15.500 0 0 1 29 8.500Z" fill="#dc4a3d" /><path d="M15.500 16L2 8.500A15.500 15.500 0 0 0 15 31.500Z" fill="#1da462" /><path d="M15.500 9H29.500A15.500 15.500 0 0 1 15 31.500Z" fill="#ffcd41" />
          <circle cx="15.500" cy="16" r="7" fill="#fff" /><circle cx="15.500" cy="16" r="5.500" fill="#4688f1" />
          <circle cx="26" cy="26" r="9.500" fill="#c8b0a0" /><path d="M20 19Q24 13 29 18L28 23L21 25Z" fill="#2e2525" /><circle cx="25.500" cy="21" r="3.500" fill="#eab996" /><path d="M19 34L22 26H29L33 32Q28 36 24 35Z" fill="#3a3d48" /><path d="M29 22L35 25V29L30 28Z" fill="#d93c34" />
        </Svg>
      </Task>
      <Task className="ml-[12px] w-[56px]">
        <Svg w={37} h={36} stroke="none"><circle cx="18" cy="6" r="5.500" fill="#7b83eb" /><circle cx="28" cy="6.500" r="3.800" fill="#5059c9" /><path d="M12 12H25V24Q25 31 18 31Q12 31 12 24Z" fill="#7b83eb" /><path d="M25 12H34V22Q33 26 28 26H25Z" fill="#5059c9" /><rect y="7" width="17" height="17" rx="1.500" fill="#4b53bc" /><path d="M4.500 11.500H12.500M8.500 11.500V20" stroke="#fff" strokeWidth="2.200" /><circle cx="27.500" cy="26" r="9.200" fill="#c4163a" /><text x="27.500" y="32" fontSize="17" fill="#fff" textAnchor="middle">1</text></Svg>
      </Task>
      <Task className="ml-[13px] w-[56px]">
        <Svg w={35} h={36} stroke="none"><circle cx="15.500" cy="16" r="15" fill="#2ba0da" /><path d="M6 16L23 9L20 23L14.500 19L11.500 21.500L11 17.500Z" fill="#fff" /><circle cx="24.500" cy="25.500" r="10.200" fill="#ee3b35" /><text x="24.500" y="31.500" fontSize="17" fill="#fff" textAnchor="middle">7</text></Svg>
      </Task>
      <Task className="ml-[12px] w-[56px]">
        <Svg w={37} h={36} stroke="none"><path d="M10 1H32V27Q32 30 28 30H8V18Z" fill="#0a64ad" /><path d="M10 1H24V14H10Z" fill="#1382d0" /><path d="M24 1H32V14H24Z" fill="#3ab9f0" /><path d="M16 14H32V20H16Z" fill="#1b9de2" /><rect y="7" width="17" height="17" rx="1.500" fill="#1173c7" /><ellipse cx="8.500" cy="15.500" rx="3.600" ry="4.200" fill="none" stroke="#fff" strokeWidth="2.200" /><path d="M16 20H37V35H16Z" fill="#e9b578" /><path d="M16 21L26.500 29L37 21" stroke="#fff" strokeWidth="1.600" fill="none" /></Svg>
      </Task>
      <Task className="ml-[12.500px] w-[56px]">
        <Svg w={34} h={32} stroke="none"><path d="M18 1A15 15 0 0 0 3 16H18Z" fill="#ed6c47" /><path d="M18 1A15 15 0 0 1 33 16H18Z" fill="#ff8f6b" /><path d="M3 16H33A15 15 0 0 1 3 16Z" fill="#d35230" /><rect y="7.500" width="17" height="17" rx="1.500" fill="#c43e1c" /><path d="M6 20.500V11.800H9Q12 11.800 12 14.500T9 17.200H6" stroke="#fff" strokeWidth="2.200" fill="none" /></Svg>
      </Task>
      <Task active className="ml-[7px] w-[67px]">
        <div className="flex h-[32px] w-[32px] items-center justify-center bg-[#f4f4f4]"><TableauMark size={28} sw={3.500} /></div>
      </Task>
      <Task className="ml-[6.500px] w-[56px]">
        <div className="flex h-[34px] w-[34px] items-center justify-center rounded-full bg-[#75aadb] font-['Liberation_Serif',serif] text-[23px] leading-none text-white">R</div>
      </Task>
      <Task className="ml-[12.500px] w-[56px]">
        <Svg w={33} h={34} stroke="none"><ellipse cx="13" cy="16" rx="12" ry="5" fill="#8c9096" transform="rotate(-8 13 16)" /><ellipse cx="15" cy="9" rx="14" ry="7" fill="#f2f0f0" stroke="#d33d44" strokeWidth="1.800" transform="rotate(-15 15 9)" /><path d="M22 3L16 17M11 9L18 18" stroke="#777" strokeWidth="1.500" /><ellipse cx="26" cy="20" rx="5" ry="3" fill="none" stroke="#1b75bb" strokeWidth="2.200" transform="rotate(20 26 20)" /><ellipse cx="19" cy="27" rx="3" ry="5.500" fill="none" stroke="#1b75bb" strokeWidth="2.200" transform="rotate(-12 19 27)" /></Svg>
      </Task>
      <div className="mt-[5px] ml-auto flex flex-col items-center pr-[8px] font-['Open_Sans',sans-serif] text-[17px] text-white">
        <T w={58}>4:27 am</T>
        <T w={72.5} className="mt-[8.500px]">27/3/2022</T>
      </div>
    </div>
  );
}

function Tableau() {
  return (
    <div className="flex h-[1611px] w-[2678px] shrink-0 flex-col bg-[#f5f5f5]">
      <div className="bg-white"><TitleBar /><MenuBar /></div>
      <Toolbar />
      <div className="flex h-[1200.500px] shrink-0">
        <DataPane />
        <CardsColumn />
        <div className="ml-[8px] flex w-[2145.500px] shrink-0 flex-col">
          <Shelf label="Columns" w={68.5} icon={<Svg w={15} h={17} strokeWidth="3"><path d="M1.500 0V3M1.500 5V17M7.500 0V3M7.500 5V17M13.500 0V3M13.500 5V17" /></Svg>}
            pill={<Pill w={113.5} className="ml-[3px] w-[206px]">Time Per Hour</Pill>} />
          <Shelf className="mt-[9.500px]" label="Rows" w={41.5} icon={<Svg w={16} h={15} strokeWidth="3"><path d="M0 1.500H3M5 1.500H16M0 7.500H3M5 7.500H16M0 13.500H3M5 13.500H16" /></Svg>}
            pill={<Pill green w={136.5} className="ml-[3px] w-[206px]">SUM(Total Trips)</Pill>} />
          <div className="mt-[9px] flex">
            <div className="relative h-[1097px] w-[1922px] shrink-0 border-2 border-[#d6d6d6] bg-white">
              <div className="h-[91px] pt-[21px]">
                <T w={208} className="ml-[14.500px] text-[25.5px] font-light text-[#333]">Trips Generated</T>
                <T w={111} className="mt-[25px] ml-[918.500px] text-[17px] text-[#333]">Time Per Hour</T>
              </div>
              <Chart />
              <AxisMenu />
            </div>
            <Filters />
          </div>
        </div>
      </div>
      <SheetTabs />
      <StatusBar />
      <Taskbar />
      <div className="grow bg-black" />
    </div>
  );
}

/* ---------- edit axis dialog ---------- */
const Radio = ({ on, color = "#616161" }) => (
  <Svg w={49} h={49} stroke={color} strokeWidth="3"><circle cx="24.500" cy="24.500" r="22.500" />{on && <circle cx="24.500" cy="24.500" r="11" fill={color} stroke="none" />}</Svg>
);
const Check = ({ on }) => (
  <div className="flex h-[48px] w-[48px] shrink-0 items-center justify-center rounded-[4px] border-[3px] border-[#616161] bg-white">
    {on && <Svg w={30} h={32} strokeWidth="4.500" stroke="#616161"><path d="M2 18L11 28L28 2" /></Svg>}
  </div>
);

function Option({ control, label, w, className = "" }) {
  return (
    <div className={"flex h-[68.700px] shrink-0 items-center text-[#333] " + className}>
      {control}
      <T w={w} className="ml-[21.500px]">{label}</T>
    </div>
  );
}

const Input = ({ label, w, caret, className = "" }) => (
  <div className={"flex w-[656px] shrink-0 items-center border-b-4 border-[#c4c4c4] pt-[2px] pl-[26px] text-[#bdbdbd] " + className}>
    <T w={w}>{label}</T>
    {caret && <Caret w={26} h={18} color="#c2c2c2" className="mr-[18px] ml-auto" />}
  </div>
);

function Dialog() {
  return (
    <div className="ml-[63px] flex h-[2235px] w-[1540px] shrink-0 flex-col overflow-hidden bg-white text-[41px] font-[450] text-[#333]">
      <div className="flex h-[288px] shrink-0 flex-col bg-[#f5f5f5]">
        <div className="flex h-[150px] shrink-0 items-start pl-[59px]">
          <T w={541} className="mt-[38px] text-[55px] font-normal text-[#444]">Edit Axis [Total Trips]</T>
          <Svg w={40} h={40} strokeWidth="3.500" className="mt-[46px] ml-[860px]"><path d="M1 1L39 39M39 1L1 39" /></Svg>
        </div>
        <div className="flex grow text-[#666]">
          <div className="flex w-[766px] flex-col items-center">
            <T w={150} className="mt-[45px]">General</T>
            <div className="mt-auto h-[4px] w-full bg-white" />
            <div className="mb-[2px] h-[12px] w-full bg-[#616161]" />
          </div>
          <div className="flex w-[774px] justify-center pl-[6px]"><T w={208} className="mt-[45px]">Tick Marks</T></div>
        </div>
      </div>
      <T w={121} className="mt-[64.500px] ml-[58px]">Range</T>
      <div className="mt-[46.500px] flex">
        <div className="w-[1045.800px] shrink-0 pl-[95.500px]">
          <Option control={<Radio on />} label="Automatic" w={201} />
          <Option control={<Radio />} label="Uniform axis range for all rows or columns" w={812} />
          <Option control={<Radio />} label="Independent axis ranges for each row or column" w={927} />
          <Option control={<Radio />} label="Fixed" w={101} />
        </div>
        <Option className="ml-[96px]" control={<Check on />} label="Include zero" w={234} />
      </div>
      <div className="mt-[43px] ml-[102px] flex gap-[66px]"><Input className="h-[82px]" label="Automatic" w={201} caret /><Input className="h-[82px]" label="Automatic" w={201} caret /></div>
      <div className="mt-[40px] ml-[102px] flex gap-[66px]"><Input className="h-[84px]" label="0" w={25} /><Input className="h-[84px]" label="69,251" w={128} /></div>
      <T w={105} className="mt-[136px] ml-[59px]">Scale</T>
      <div className="mt-[46px] pl-[95.500px]">
        <Option control={<Check />} label="Reversed" w={175} />
        <Option control={<Check />} label="Logarithmic" w={231} />
      </div>
      <div className="mt-[24px] flex h-[68px] shrink-0 items-center pl-[167.500px] text-[#bdbdbd]">
        <Radio on color="#bdbdbd" /><T w={151} className="ml-[21px]">Positive</T>
        <div className="ml-[103px]"><Radio color="#bdbdbd" /></div><T w={213} className="ml-[22px]">Symmetric</T>
      </div>
      <T w={199} className="mt-[65px] ml-[60px]">Axis Titles</T>
      <div className="relative mt-[35px] h-[145px] shrink-0">
        <T w={84} className="ml-[102px] text-[#616161]">Title</T>
        <T w={606} className="mt-[38px] ml-[128px]">Total Trips from Origin Subzone</T>
        <div className="mt-[17px] ml-[102px] h-[4px] w-[1378px] bg-[#cbcbcb]" />
        <Svg w={700} h={196} stroke="none" className="absolute top-[-14px] left-[46px] mix-blend-multiply">
          <path transform="scale(0.9904 1)" fill="#ffff00" d="M0 27L2 20L7 14L17 11H236V14H402V11H468V7H506V4H559V0H707V172H625V175.500H603V179H531V183H499V186H121V183H93V186H73L65 196H0Z" />
        </Svg>
      </div>
      <T w={152} className="mt-[50px] ml-[101px] text-[#bdbdbd]">Subtitle</T>
      <div className="mt-[22px] flex items-start">
        <div className="ml-[102px] h-[79.5px] w-[1041px] shrink-0 border-b-4 border-[#c4c4c4] pt-[16px] pl-[26px] text-[#bdbdbd]"><T w={152}>Subtitle</T></div>
        <Option className="mt-[38px] ml-[68px]" control={<Check on />} label="Automatic" w={201} />
      </div>
      <div className="mt-[188px] flex h-[60px] shrink-0 items-center pl-[114px] text-[#616161]">
        <Svg w={32} h={40} strokeWidth="3.500"><path d="M3 34Q9 39 18 37Q30 32 29 20Q27 9 15 9H4M12 1L4 9L12 17" /></Svg>
        <T w={110} className="ml-[20px]">Reset</T>
      </div>
      <div className="mt-auto h-[3px] shrink-0 bg-[#c4c4c4]" />
      <div className="flex h-[7px] shrink-0 gap-[51.300px] bg-[#d0d0d0]">
        <div className="w-[52px] shrink-0 bg-[#cd8540]" />
        {[0, 1, 2, 3, 4, 5, 6].map((i) => <div key={i} className="w-[155px] shrink-0 bg-[#cd8540]" />)}
      </div>
    </div>
  );
}

export default function App() {
  return (
    <div className="h-screen w-screen overflow-hidden bg-white">
      <div className="flex h-[2235px] w-[4393px] bg-white font-['Inter',sans-serif] [zoom:0.9324]">
        <div className="flex pt-[312px]">
          <SlideStrip />
          <Tableau />
        </div>
        <Dialog />
      </div>
    </div>
  );
}
